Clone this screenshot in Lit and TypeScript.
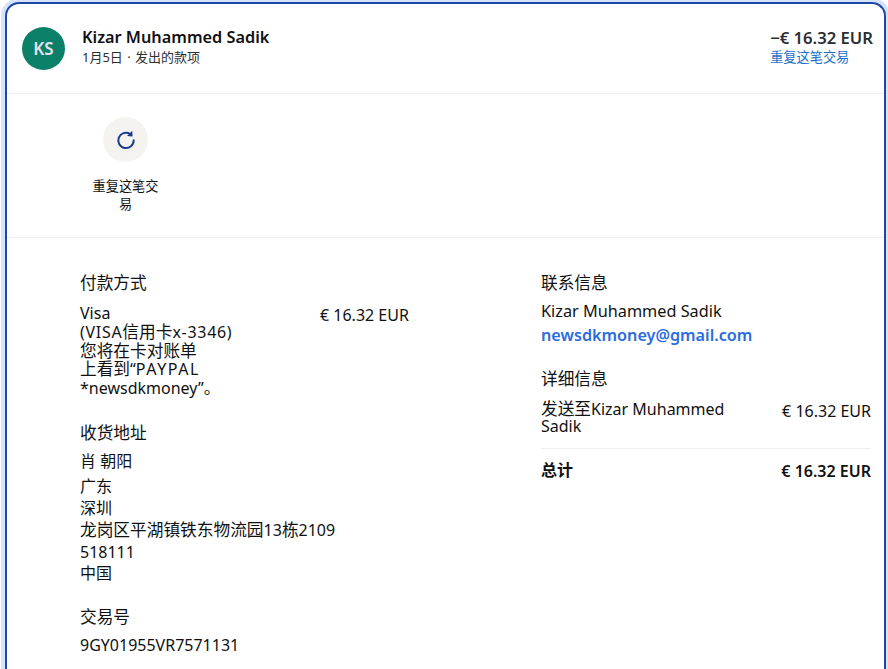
import { LitElement, html, css } from "lit";
import { customElement } from "lit/decorators.js";

@customElement("app-root")
export class AppRoot extends LitElement {
  static styles = css`
    :host {
      display: block;
      width: 888px;
      height: 669px;
      overflow: hidden;
      background: #fff;
      font-family: "Noto Sans", "Noto Sans CJK SC", sans-serif;
      color: #111;
    }
    .card {
      box-sizing: border-box;
      margin: 2px 0 0 5px;
      width: 881px;
      height: 700px;
      background: #fff;
      border: 2px solid #1f47a8;
      border-bottom: none;
      border-radius: 14px 14px 0 0;
      box-shadow: 0 0 0 4px #d6e4fb;
    }
    .c { font-size: 16.7px; }
    .caps { letter-spacing: 0.7px; }
    .caps2 { letter-spacing: 1.6px; }
    .head {
      box-sizing: border-box;
      height: 90px;
      display: flex;
      align-items: flex-start;
      padding: 23px 11px 0 15px;
      border-bottom: 1px solid #eeeeee;
    }
    .avatar {
      width: 43px;
      height: 43px;
      border-radius: 50%;
      background: #0b8068;
      color: #e6e0f0;
      display: flex;
      align-items: center;
      justify-content: center;
      font-size: 17px;
      font-weight: 600;
      flex: none;
    }
    .who { margin-left: 17px; flex: 1; }
    .name { font-size: 16.3px; font-weight: 600; line-height: 21px; }
    .sub { font-size: 13px; line-height: 18px; color: #2c2e2f; word-spacing: 1px; }
    .amt b { display: block; font-size: 16.65px; font-weight: 600; line-height: 21px; color: #2c2e2f; }
    .amt span { display: block; font-size: 13.2px; line-height: 18px; color: #1a6fc9; }
    .actions {
      box-sizing: border-box;
      height: 144px;
      padding: 23px 0 0 85px;
      border-bottom: 1px solid #eeeeee;
    }
    .act { width: 67px; display: flex; flex-direction: column; align-items: center; text-align: center; }
    .circle {
      width: 45px;
      height: 45px;
      border-radius: 50%;
      background: #f4f3ef;
      display: flex;
      align-items: center;
      justify-content: center;
      margin-bottom: 15px;
    }
    .act span { font-size: 13.2px; line-height: 18px; }
    .body {
      display: grid;
      grid-template-columns: 461px 330px;
      padding: 33px 0 0 73px;
    }
    h3 { margin: 0; font-size: 16.7px; font-weight: 400; line-height: 24px; }
    .pay { display: flex; margin-top: 9px; }
    .pay .txt { width: 240px; font-size: 16px; line-height: 18.75px; }
    .money { font-size: 16px; line-height: 22px; white-space: nowrap; }
    .addr-h { margin-top: 23px; }
    .line { font-size: 16px; line-height: 21.5px; }
    .mt1 { margin-top: 6px; }
    .mt2 { margin-top: 4px; }
    .mt3 { margin-top: 6px; }
    .tx-h { margin-top: 20px; }
    .nm { font-size: 16.25px; }
    .mail { color: #2a6ce0; font-weight: 600; font-size: 16.2px; line-height: 24px; }
    .det-h { margin-top: 20px; }
    .row { display: flex; justify-content: space-between; }
    .row.first { margin-top: 9px; }
    .row .l { width: 200px; font-size: 16px; line-height: 17.5px; }
    .sep { height: 1px; background: #eeeeee; margin: 12px 0 9px; }
    .total { font-weight: 600; }
    .total .l { font-size: 16px; line-height: 24px; }
    .total .money { font-size: 16px; line-height: 24px; padding-top: 1px; }
  `;

  render() {
    return html`
      <div class="card">
        <div class="head">
          <div class="avatar">KS</div>
          <div class="who">
            <div class="name">Kizar Muhammed Sadik</div>
            <div class="sub">1月5日 · 发出的款项</div>
          </div>
          <div class="amt"><b>−€ 16.32 EUR</b><span>重复这笔交易</span></div>
        </div>
        <div class="actions">
          <div class="act">
            <div class="circle">
              <svg width="20" height="20" viewBox="0 0 20 20" fill="none">
                <path d="M17.7 10.3A7.7 7.7 0 1 1 14 3.8" stroke="#1f3a8a" stroke-width="2" stroke-linecap="round"/>
                <path d="M16.2.8l.4 5.6-5.6-.3z" fill="#1f3a8a"/>
              </svg>
            </div>
            <span>重复这笔交易</span>
          </div>
        </div>
        <div class="body">
          <div class="left">
            <h3>付款方式</h3>
            <div class="pay">
              <div class="txt">Visa<br /><span class="caps">(VISA</span><span class="c">信用卡</span><span class="caps">x-3346)</span><br /><span class="c">您将在卡对账单</span><br /><span class="c">上看到</span>“<span class="caps2">PAYPAL</span><br />*newsdkmoney”<span class="c">。</span></div>
              <div class="money">€ 16.32 EUR</div>
            </div>
            <h3 class="addr-h">收货地址</h3>
            <div class="line mt1 c">肖 朝阳</div>
            <div class="line mt2 c">广东</div>
            <div class="line c">深圳</div>
            <div class="line"><span class="c">龙岗区平湖镇铁东物流园</span>13<span class="c">栋</span>2109</div>
            <div class="line">518111</div>
            <div class="line c">中国</div>
            <h3 class="tx-h">交易号</h3>
            <div class="line mt3">9GY01955VR7571131</div>
          </div>
          <div class="right">
            <h3>联系信息</h3>
            <div class="line mt3 nm">Kizar Muhammed Sadik</div>
            <div class="mail">newsdkmoney@gmail.com</div>
            <h3 class="det-h">详细信息</h3>
            <div class="row first"><div class="l"><span class="c">发送至</span>Kizar Muhammed Sadik</div><div class="money">€ 16.32 EUR</div></div>
            <div class="sep"></div>
            <div class="row total"><div class="l">总计</div><div class="money">€ 16.32 EUR</div></div>
          </div>
        </div>
      </div>
    `;
  }
}
